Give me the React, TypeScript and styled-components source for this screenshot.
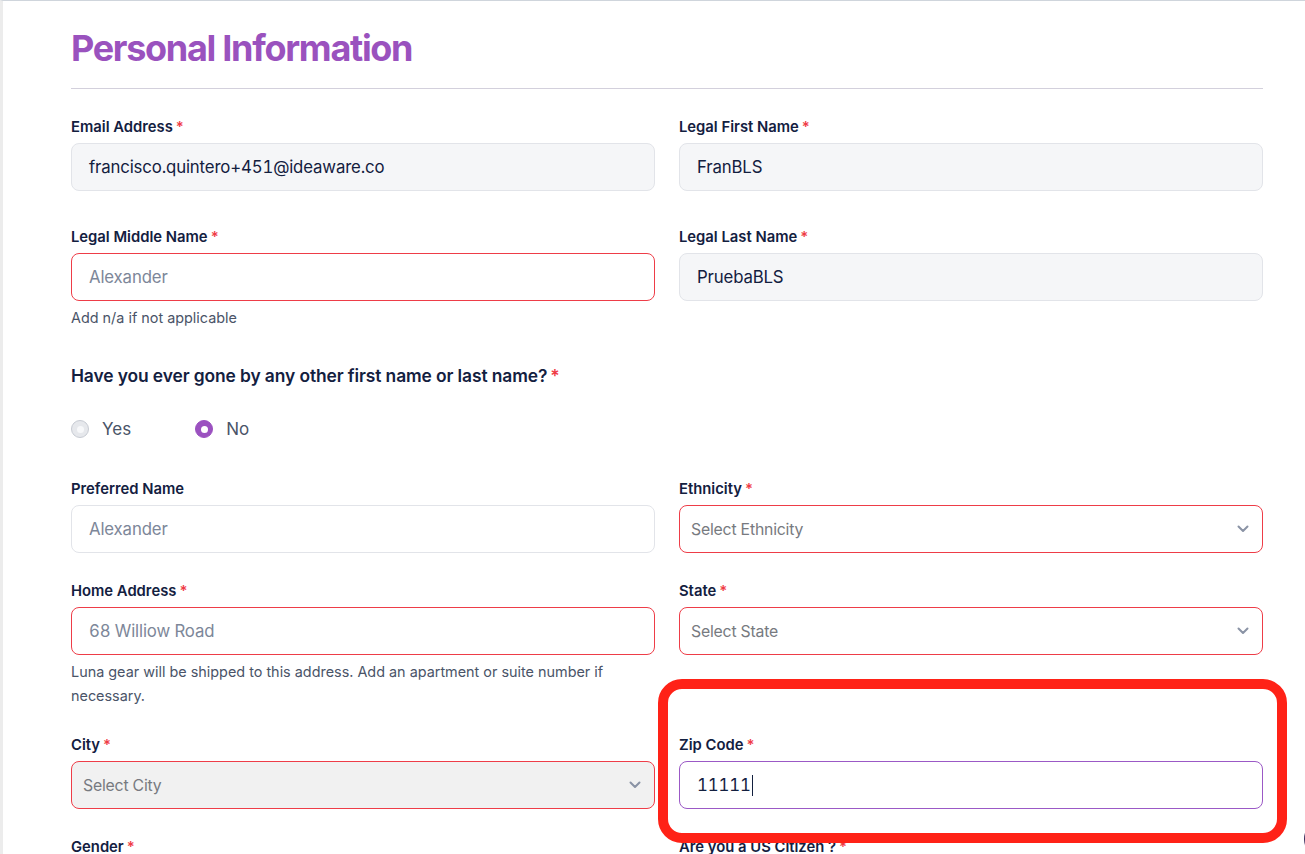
import React from "react";
import styled, { createGlobalStyle } from "styled-components";

const Global = createGlobalStyle`
  html, body { margin: 0; padding: 0; background: #ffffff; }
  body { font-family: "Inter", "Noto Sans", sans-serif; overflow: hidden; }
  * { box-sizing: border-box; }
`;

const Page = styled.div`
  position: relative;
  width: 1305px;
  height: 854px;
  overflow: hidden;
  border-top: 1px solid #cfd5dc;
  border-left: 3px solid #ececec;
  background: #fff;
`;

const Content = styled.div`
  width: 1192px;
  margin-left: 68px;
  display: flex;
  flex-direction: column;
`;

const Title = styled.h1`
  margin: 25px 0 18px;
  font-size: 36px;
  line-height: 44px;
  font-weight: 700;
  letter-spacing: -1.3px;
  color: #9a52be;
`;

const Divider = styled.div`
  height: 1px;
  background: #d3d0dc;
`;

const Row = styled.div<{ $mt: number }>`
  display: grid;
  grid-template-columns: 1fr 1fr;
  column-gap: 24px;
  margin-top: ${(p) => p.$mt}px;
  align-items: start;
`;

const Field = styled.div`
  display: flex;
  flex-direction: column;
  min-width: 0;
`;

const Label = styled.label`
  display: block;
  font-size: 14.8px;
  line-height: 20px;
  font-weight: 600;
  color: #13203f;
  margin-bottom: 6px;
`;

const Req = styled.span`
  color: #ef3b45;
  margin-left: 3px;
`;

type Tone = "filled" | "plain" | "error" | "focus";

const Box = styled.div<{ $tone: Tone }>`
  height: 48px;
  border-radius: 8px;
  display: flex;
  align-items: center;
  padding: 0 17px;
  font-size: 16.8px;
  letter-spacing: -0.15px;
  font-variant-numeric: tabular-nums;
  color: #13203f;
  border: 1px solid
    ${(p) =>
      p.$tone === "error"
        ? "#ee3d48"
        : p.$tone === "focus"
        ? "#9b59c6"
        : "#e2e4e9"};
  background: ${(p) => (p.$tone === "filled" ? "#f5f6f8" : "#ffffff")};
`;

const Placeholder = styled.span`
  color: #7d8799;
`;

const Caret = styled.span`
  display: inline-block;
  width: 1px;
  height: 21px;
  background: #13203f;
  margin-left: 1px;
`;

const Select = styled.div<{ $disabled?: boolean }>`
  height: 48px;
  border-radius: 8px;
  border: 1px solid #ee3d48;
  background: ${(p) => (p.$disabled ? "#f1f1f1" : "#ffffff")};
  display: flex;
  align-items: center;
  justify-content: space-between;
  padding: 0 13px 0 11px;
  font-size: 15.8px;
  letter-spacing: -0.2px;
  color: #777a80;
`;

const Helper = styled.p`
  margin: 5px 0 0;
  font-size: 14.4px;
  line-height: 24px;
  color: #4a5468;
`;

const Question = styled.div`
  margin-top: 34px;
  font-size: 17.4px;
  line-height: 24px;
  font-weight: 600;
  color: #13203f;
  letter-spacing: -0.1px;
`;

const RadioGroup = styled.div`
  margin-top: 29px;
  display: flex;
  align-items: center;
  gap: 64px;
  height: 24px;
`;

const RadioOption = styled.div`
  display: flex;
  align-items: center;
  gap: 13px;
  font-size: 17px;
  color: #4a5468;
`;

const RadioDot = styled.span<{ $on?: boolean }>`
  width: 18px;
  height: 18px;
  border-radius: 50%;
  display: inline-flex;
  align-items: center;
  justify-content: center;
  background: ${(p) => (p.$on ? "#9b51c0" : "#e6e8ec")};
  border: 1px solid ${(p) => (p.$on ? "#9b51c0" : "#c7cbd3")};
  &::after {
    content: "";
    width: 7px;
    height: 7px;
    border-radius: 50%;
    background: ${(p) => (p.$on ? "#ffffff" : "#f7f8fa")};
  }
`;

const Highlight = styled.div`
  position: absolute;
  left: 655px;
  top: 678px;
  width: 629px;
  height: 164px;
  border: 10px solid #ff2217;
  border-radius: 24px;
  pointer-events: none;
`;

const ChatBubble = styled.div`
  position: absolute;
  left: 1301px;
  top: 818px;
  width: 40px;
  height: 40px;
  border-radius: 50%;
  background: #3a2c5c;
`;

const Chevron = () => (
  <svg width="12" height="8" viewBox="0 0 12 8" fill="none">
    <path d="M1.5 1.5L6 6L10.5 1.5" stroke="#8a93a5" strokeWidth="2" strokeLinecap="round" strokeLinejoin="round" />
  </svg>
);

const Lbl = ({ text, req = true }: { text: string; req?: boolean }) => (
  <Label>
    {text}
    {req && <Req>*</Req>}
  </Label>
);

export default function App() {
  return (
    <>
      <Global />
      <Page>
        <Content>
          <Title>Personal Information</Title>
          <Divider />
          <Row $mt={28}>
            <Field>
              <Lbl text="Email Address" />
              <Box $tone="filled">francisco.quintero+451@ideaware.co</Box>
            </Field>
            <Field>
              <Lbl text="Legal First Name" />
              <Box $tone="filled">FranBLS</Box>
            </Field>
          </Row>
          <Row $mt={36}>
            <Field>
              <Lbl text="Legal Middle Name" />
              <Box $tone="error">
                <Placeholder>Alexander</Placeholder>
              </Box>
              <Helper>Add n/a if not applicable</Helper>
            </Field>
            <Field>
              <Lbl text="Legal Last Name" />
              <Box $tone="filled">PruebaBLS</Box>
            </Field>
          </Row>
          <Question>
            Have you ever gone by any other first name or last name?<Req>*</Req>
          </Question>
          <RadioGroup>
            <RadioOption>
              <RadioDot />
              Yes
            </RadioOption>
            <RadioOption>
              <RadioDot $on />
              No
            </RadioOption>
          </RadioGroup>
          <Row $mt={38}>
            <Field>
              <Lbl text="Preferred Name" req={false} />
              <Box $tone="plain">
                <Placeholder>Alexander</Placeholder>
              </Box>
            </Field>
            <Field>
              <Lbl text="Ethnicity" />
              <Select>
                Select Ethnicity
                <Chevron />
              </Select>
            </Field>
          </Row>
          <Row $mt={28}>
            <Field>
              <Lbl text="Home Address" />
              <Box $tone="error">
                <Placeholder>68 Williow Road</Placeholder>
              </Box>
              <Helper>
                Luna gear will be shipped to this address. Add an apartment or suite number if
                <br />
                necessary.
              </Helper>
            </Field>
            <Field>
              <Lbl text="State" />
              <Select>
                Select State
                <Chevron />
              </Select>
            </Field>
          </Row>
          <Row $mt={27}>
            <Field>
              <Lbl text="City" />
              <Select $disabled>
                Select City
                <Chevron />
              </Select>
            </Field>
            <Field>
              <Lbl text="Zip Code" />
              <Box $tone="focus">
                11111
                <Caret />
              </Box>
            </Field>
          </Row>
          <Row $mt={28}>
            <Field>
              <Lbl text="Gender" />
            </Field>
            <Field>
              <Lbl text="Are you a US Citizen ?" />
            </Field>
          </Row>
        </Content>
        <Highlight />
        <ChatBubble />
      </Page>
    </>
  );
}
